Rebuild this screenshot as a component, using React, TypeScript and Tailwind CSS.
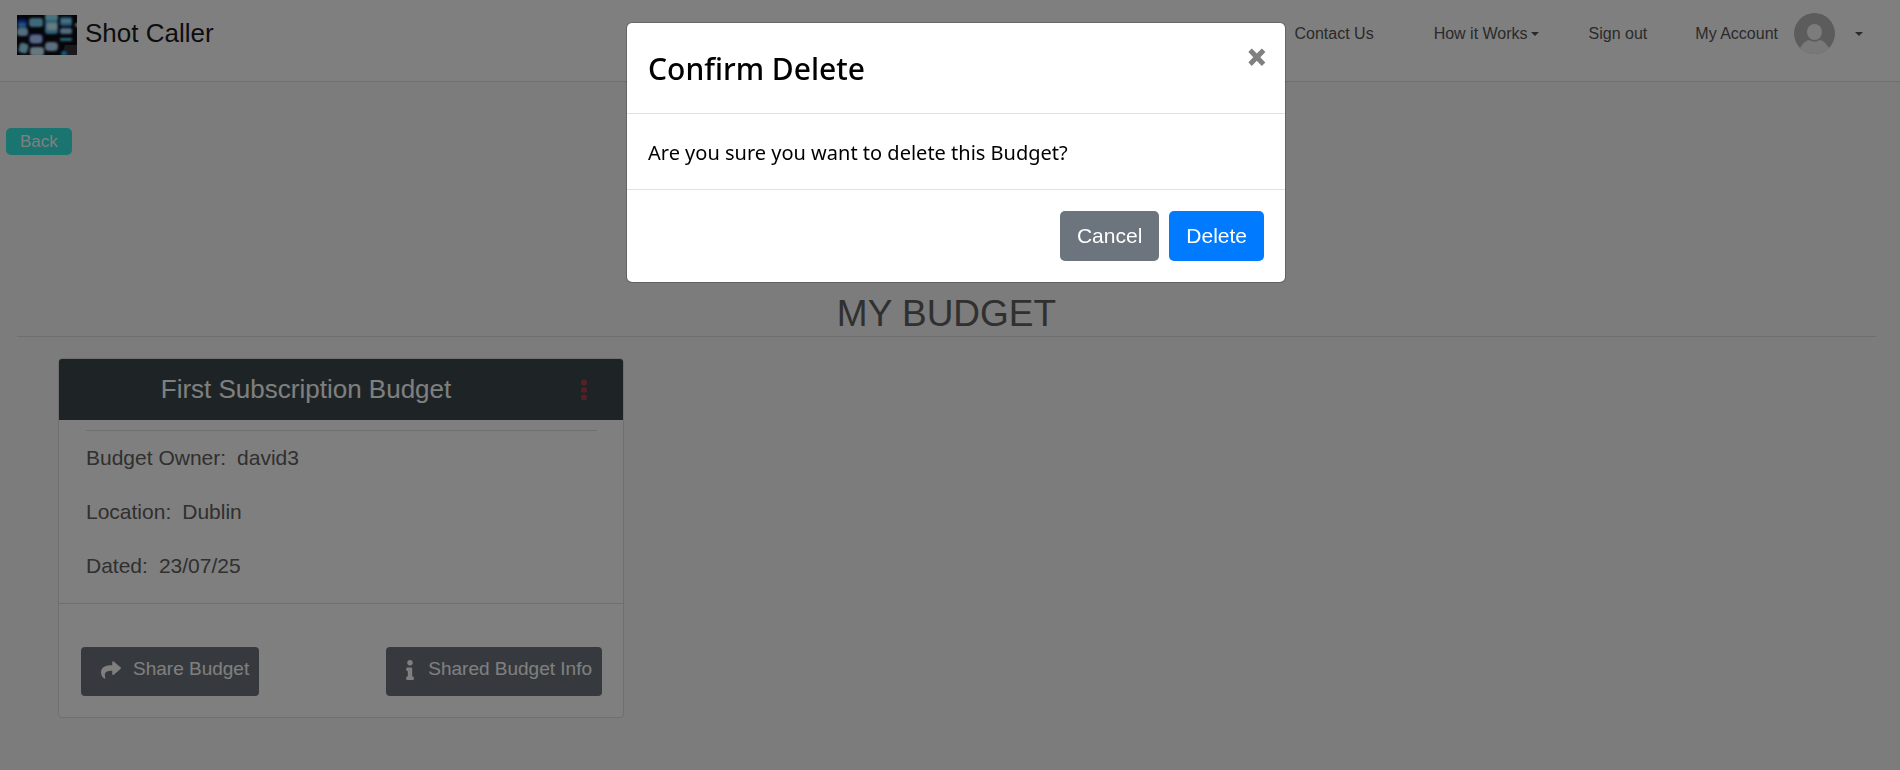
import React from "react";
import { FaShare, FaInfo, FaEllipsisV } from "react-icons/fa";

const rows = [
  { label: "Budget Owner:", value: "david3" },
  { label: "Location:", value: "Dublin" },
  { label: "Dated:", value: "23/07/25" },
];

function Logo() {
  return (
    <svg width="60" height="40" viewBox="0 0 60 40" aria-hidden="true">
      <defs>
        <filter id="glow" x="-20%" y="-20%" width="140%" height="140%">
          <feGaussianBlur stdDeviation="0.8" />
        </filter>
      </defs>
      <rect width="60" height="40" fill="#0c0c14" />
      <path d="M48 30h12v10H45z" fill="#33333c" />
      <g filter="url(#glow)">
        <rect x="0" y="4" width="10" height="10" rx="3" fill="#1038d8" />
        <rect x="1" y="8" width="8" height="4" rx="2" fill="#3fb0e0" />
        <rect x="0" y="13" width="11" height="8" rx="3" fill="#a4dcff" />
        <rect x="2" y="28" width="9" height="10" rx="3" fill="#9ae0fa" transform="rotate(14 6 33)" />
        <rect x="12" y="3" width="14" height="9" rx="3" fill="#7cd0f8" />
        <rect x="12" y="19" width="14" height="10" rx="4" fill="#2a3fd8" />
        <rect x="13" y="20" width="12" height="8" rx="3" fill="#b4d0ff" />
        <rect x="13" y="32" width="14" height="9" rx="3" fill="#ccf0ff" />
        <rect x="28" y="-2" width="13" height="8" rx="2" fill="#8ce8f8" />
        <rect x="28" y="5" width="13" height="14" rx="3" fill="#5cc0f4" />
        <rect x="30" y="8" width="10" height="7" rx="2" fill="#ccf8ff" />
        <rect x="28" y="27" width="13" height="9" rx="4" fill="#b8dcff" />
        <rect x="43" y="2" width="12" height="9" rx="2" fill="#4cb4f0" />
        <rect x="44" y="5" width="10" height="2" rx="1" fill="#c0f0ff" />
        <rect x="43" y="13" width="12" height="6" rx="2" fill="#a0d4ff" />
        <rect x="43" y="23" width="12" height="3" rx="1" fill="#50ccf0" />
        <rect x="44" y="36" width="6" height="5" rx="2" fill="#2ca8e8" />
        <circle cx="60" cy="10" r="2" fill="#d8d8e0" />
      </g>
    </svg>
  );
}

function Avatar() {
  return (
    <svg width="41" height="41" viewBox="0 0 41 41" aria-hidden="true">
      <circle cx="20.5" cy="20.5" r="20.5" fill="#b8b8b8" />
      <ellipse cx="20.5" cy="19" rx="7.5" ry="8" fill="#f8f8f8" />
      <path d="M6 35C9 30 12 27.500 15 27Q20.500 30.500 26 27C29 27.500 32 30 35 35A20.500 20.500 0 0 1 6 35Z" fill="#f3f3f3" />
    </svg>
  );
}

function Caret() {
  return (
    <svg width="8" height="4" viewBox="0 0 8 4" aria-hidden="true">
      <path d="M0 0h8L4 4z" fill="currentColor" />
    </svg>
  );
}

function Header() {
  return (
    <header className="flex items-start justify-between border-b border-[#dcdcdc] bg-white pr-[37px] pb-[26px] pl-[17px]">
      <a href="#home" className="flex items-center gap-2 pt-[15px] text-[26px] leading-9 text-[#1a1a1a]">
        <Logo />
        <span className="-mt-1">Shot Caller</span>
      </a>
      <nav className="flex items-center pt-[13px] text-base leading-6 text-[#555]">
        <a href="#contact" className="mr-[60px]">Contact Us</a>
        <button type="button" className="mr-[50px] flex items-center gap-[3px]">
          How it Works
          <Caret />
        </button>
        <a href="#signout" className="mr-12">Sign out</a>
        <button type="button" className="flex items-center">
          <span className="mr-4">My Account</span>
          <Avatar />
          <span className="ml-5">
            <Caret />
          </span>
        </button>
      </nav>
    </header>
  );
}

function BudgetCard() {
  return (
    <article className="ml-[41px] w-[566px] overflow-hidden rounded border border-[#dfdfdf] bg-white">
      <div className="flex items-center bg-[#3c484c] py-3 pr-7">
        <h2 className="flex-1 pr-5 text-center text-[26px] leading-[37px] text-white">First Subscription Budget</h2>
        <button type="button" aria-label="Budget options" className="text-[22px] text-[#a84048]">
          <FaEllipsisV />
        </button>
      </div>
      <div className="pt-[10px] pr-[26px] pb-[10px] pl-[27px] text-[21px] leading-[54px] text-[#606060]">
        <hr className="border-[#dedede]" />
        <dl>
          {rows.map((row) => (
            <div key={row.label} className="flex gap-[11px]">
              <dt>{row.label}</dt>
              <dd>{row.value}</dd>
            </div>
          ))}
        </dl>
      </div>
      <div className="flex justify-between border-t border-[#dedede] pt-[43px] pr-[21px] pb-[21px] pl-[22px] text-[19px] text-white">
        <button type="button" className="flex h-[49px] items-center gap-3 rounded bg-[#6c757d] pr-[10px] pb-1 pl-5">
          <FaShare className="text-xl" />
          Share Budget
        </button>
        <button type="button" className="flex h-[49px] items-center gap-2 rounded bg-[#6c757d] pr-[10px] pb-1 pl-[14px]">
          <FaInfo className="w-5 text-xl" />
          Shared Budget Info
        </button>
      </div>
    </article>
  );
}

function ConfirmDialog() {
  return (
    <div className="fixed inset-0 bg-black/50">
      <section
        role="dialog"
        aria-modal="true"
        aria-labelledby="dialog-title"
        className="mx-auto mt-[22px] w-[660px] translate-x-[6px] rounded-md border border-black/20 bg-white bg-clip-padding text-black"
      >
        <div className="flex items-start justify-between border-b border-[#dee2e6] px-[21px] pt-[22px] pb-5">
          <h2 id="dialog-title" className="font-['Noto_Sans'] text-[30px] leading-[48px] font-medium">
            Confirm Delete
          </h2>
          <button type="button" aria-label="Close" className="-mr-1 font-['Open_Sans'] text-[38px] leading-[23px] font-extrabold text-[#808080]">
            ×
          </button>
        </div>
        <p className="px-[21px] pt-[23px] pb-[21px] font-['Noto_Sans'] text-[20px] leading-[31px]">
          Are you sure you want to delete this Budget?
        </p>
        <div className="flex justify-end gap-[10px] border-t border-[#dee2e6] px-[21px] py-[21px] text-[21px] text-white">
          <button type="button" className="h-[50px] rounded-[5px] bg-[#6c757d] px-[17px]">Cancel</button>
          <button type="button" className="h-[50px] rounded-[5px] bg-[#007bff] px-[17px]">Delete</button>
        </div>
      </section>
    </div>
  );
}

export default function App() {
  return (
    <div className="min-h-screen bg-[#f8f8f8] font-['Liberation_Sans',Arial,sans-serif]">
      <Header />
      <main className="pt-[46px]">
        <button type="button" className="ml-[6px] block h-[27px] rounded-[5px] bg-[#34e8e0] px-[14px] text-[17px] leading-[27px] text-white">
          Back
        </button>
        <div className="mt-[136px] mr-6 ml-[17px]">
          <h1 className="border-b border-[#dedede] text-center text-[37px] leading-[45px] text-[#606060]">MY BUDGET</h1>
          <div className="pt-[21px]">
            <BudgetCard />
          </div>
        </div>
      </main>
      <ConfirmDialog />
    </div>
  );
}
